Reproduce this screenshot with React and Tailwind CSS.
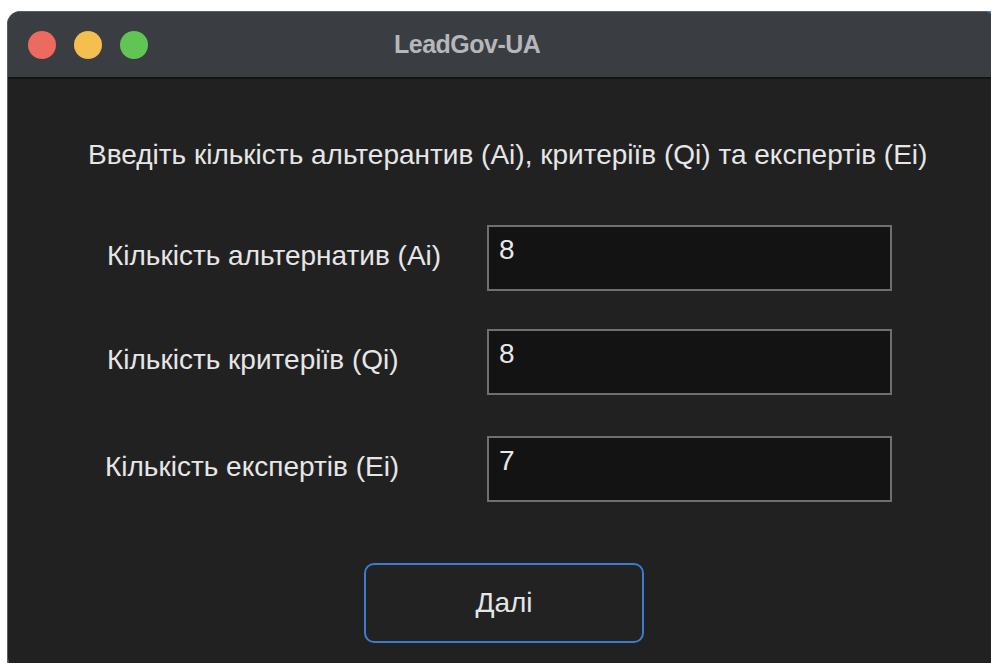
import React from "react";

const font = { fontFamily: '"Liberation Sans", Arial, sans-serif' };

function Field({ label, value, className = "", labelClass = "" }) {
  return (
    <div className={`flex items-center ${className}`}>
      <div className={`w-[380px] pb-[5px] text-[28px] leading-[32px] text-[#e6e6e6] ${labelClass}`}>{label}</div>
      <div className="w-[405px] h-[66px] border-2 border-[#6f6f6f] bg-[#131313] pl-[10px] pt-[7px] text-[28px] leading-[32px] text-[#e8e8e8]">
        {value}
      </div>
    </div>
  );
}

export default function App() {
  return (
    <div className="w-[991px] h-[663px] overflow-hidden bg-white" style={font}>
      <div className="ml-[7px] mt-[11px] w-[990px] h-[660px] bg-[#4a7db3] rounded-tl-[14px]">
        <div className="w-full h-full flex flex-col rounded-[13px] overflow-hidden border border-[#5d5f63] bg-[#212121]">
          {/* title bar */}
          <div className="h-[67px] shrink-0 flex items-center bg-[#3a3d42] border-b-2 border-[#131313] pl-[20px]">
            <div className="flex gap-[18px]">
              <span className="w-[28px] h-[28px] rounded-full bg-[#ec6a5e]" />
              <span className="w-[28px] h-[28px] rounded-full bg-[#f4bf4f]" />
              <span className="w-[28px] h-[28px] rounded-full bg-[#61c554]" />
            </div>
            <div className="ml-[246px] pb-[2px] text-[25px] leading-[30px] font-bold tracking-[-0.5px] text-[#b6b7ba]">LeadGov-UA</div>
          </div>

          {/* form */}
          <div className="flex flex-col">
            <div className="mt-[60px] pl-[80px] text-[28px] leading-[32px] text-[#e6e6e6] whitespace-nowrap">
              Введіть кількість альтерантив (Ai), критеріїв (Qi) та експертів (Ei)
            </div>
            <div className="pl-[99px] flex flex-col">
              <Field className="mt-[54px]" label="Кількість альтернатив (Ai)" value="8" />
              <Field className="mt-[38px]" label="Кількість критеріїв (Qi)" value="8" />
              <Field className="mt-[41px]" labelClass="-ml-[2px] mr-[2px]" label="Кількість експертів (Ei)" value="7" />
            </div>
            <div className="pl-[356px] mt-[61px]">
              <button className="w-[280px] h-[80px] rounded-[10px] border-2 border-[#3b7bd0] bg-[#222222] text-[28px] leading-[32px] text-[#e6e6e6]">
                Далі
              </button>
            </div>
          </div>
        </div>
      </div>
    </div>
  );
}
